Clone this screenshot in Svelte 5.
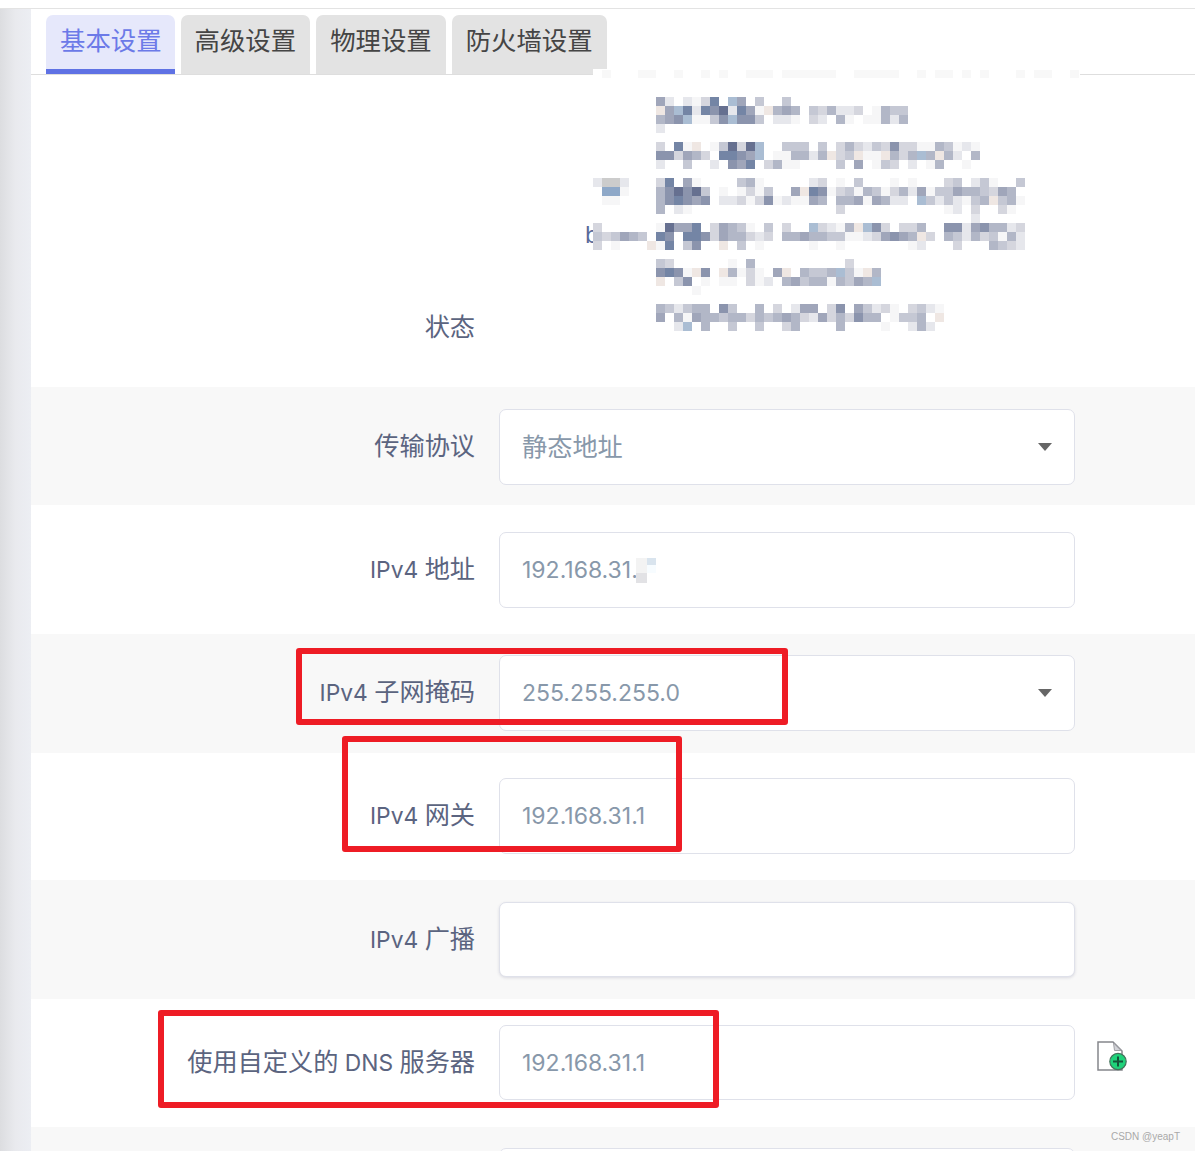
<script>
    const tabs = ["基本设置", "高级设置", "物理设置", "防火墙设置"];

    // top / bottom padding differs a little per row, the screenshot was rescaled
    const rows = [
        { label: "传输协议", value: "静态地址", select: true, top: 22, bottom: 20, h: 76 },
        { label: "IPv4 地址", value: "192.168.31.", top: 27, bottom: 26, h: 76 },
        { label: "IPv4 子网掩码", value: "255.255.255.0", select: true, top: 21, bottom: 22, h: 76 },
        { label: "IPv4 网关", value: "192.168.31.1", top: 25, bottom: 26, h: 76 },
        { label: "IPv4 广播", value: "", top: 22, bottom: 22, h: 75, shadow: true },
        { label: "使用自定义的 DNS 服务器", value: "192.168.31.1", top: 26, bottom: 27, h: 75, add: true },
        { label: "", value: "", top: 21, bottom: 0, h: 76 }
    ];

    const marks = [
        { x: 296, y: 648, w: 492, h: 77 },
        { x: 342, y: 736, w: 340, h: 116 },
        { x: 158, y: 1010, w: 561, h: 98 }
    ];

    const palette = {
        1: "#f6f6f7", 2: "#e6e7ec", 3: "#d5d6de", 4: "#c5c8d4", 5: "#b2b7c7",
        6: "#a0a6ba", 7: "#8b94ad", 8: "#7485a5", 9: "#667090",
        w: "#efe7e3", b: "#aabdd3", c: "#8ea8c8", g: "#cccccc"
    };

    // pixelated status text, 9px cells, column 7 is x=656
    const blur = [
        [97, ".......62.2138.b6.4..4"],
        [106, ".......w6b828792861w565.435223.1544"],
        [115, ".......567b1147b774.221.32.51.11525"],
        [124, ".......2"],
        [142, ".......3.81w.14939b..444.4.3532437331154121"],
        [151, ".......773653.8876b.115525w34w11w535b5w52.5"],
        [160, ".......2..4..2.768.3511....4.6.143.2.15..1"],
        [178, "2gg2...38.61....451.....23.1.4...1.1...34.241..4"],
        [187, ".cc1...579794.1.1314..6w8713415413526144655" + "4365"],
        [196, ".11....578767.22313712116" + "5.55616522.b4242145w451"],
        [205, ".......5.21................3...........12.3..31"],
        [214, "..........................................2"],
        [223, "3......19668.36541.4.3..b3215wb73.335..772675523"],
        [232, "434654.87.887365532" + "3.5565544112" + "36765w3.542534152"],
        [241, "3.1...w18.47..w.4.1.....1..1.......12...3...5432"],
        [259, ".......43......1.5..........3"],
        [268, ".......7871w7.w5131.6w.5445b41w5"],
        [277, ".......w.47.1.11.312.5645515465b"],
        [286, "...........1"],
        [304, ".......542455.74..5.3.266.37.64231.3421"],
        [313, ".......6.5165545535456532635375" + "5.1445.w"],
        [322, ".........2b.5..4..4..35....5....1..252"]
    ];

    const cells = blur.flatMap(([y, line]) =>
        [...line].map((ch, i) => ({ x: 593 + i * 9, y, fill: palette[ch] })).filter((c) => c.fill)
    );

    const strip = [[602, 9], [638, 18], [674, 9], [701, 9], [719, 9], [746, 27], [782, 54], [854, 45], [917, 9], [935, 18], [962, 9], [980, 9], [1016, 9], [1034, 18], [1070, 9]];

    // latin text sits smaller next to the chinese in the original
    const runs = (text) => text.match(/[\x00-\x7f]+|[^\x00-\x7f]+/g) ?? [];
    const isLatin = (run) => /^[\x00-\x7f]/.test(run);
</script>

{#snippet mixed(text)}
    {#each runs(text) as run}<span class:latin={isLatin(run)}>{run}</span>{/each}
{/snippet}

<div class="page">
    <div class="side"></div>
    <div class="main">
        <div class="tabs">
            {#each tabs as tab, i}
                <div class="tab" class:active={i === 0}>{tab}</div>
            {/each}
        </div>

        <div class="row status">
            <div class="label">状态</div>
        </div>

        {#each rows as row}
            <div class="row" class:short={row.h === 75} style:padding-top="{row.top}px" style:padding-bottom="{row.bottom}px">
                <div class="label">{@render mixed(row.label)}</div>
                <div class="field" class:shadow={row.shadow} style:height="{row.h}px">
                    <div>{@render mixed(row.value)}</div>
                    {#if row.select}<i class="caret"></i>{/if}
                </div>
                {#if row.add}
                    <svg class="add" width="32" height="30" viewBox="0 0 32 30">
                        <path d="M1 1h15l9 9v19H1z" fill="#fff" stroke="#85868c" stroke-width="1.5" />
                        <path d="M16.5 2l1 7.5h6.5z" fill="#d2d3d8" stroke="#a0a1a6" />
                        <circle cx="21" cy="20.5" r="8.2" fill="#1fd27a" stroke="#44705a" stroke-width="1.2" />
                        <path d="M21 15.5v10M16 20.5h10" stroke="#14553a" stroke-width="2" />
                    </svg>
                {/if}
            </div>
        {/each}
    </div>

    <div class="stray">b</div>
    <svg class="mosaic" width="1195" height="1151" shape-rendering="crispEdges">
        <rect x="593" y="69" width="14" height="6" fill="#fff" />
        <rect x="602" y="70" width="478" height="9" fill="#fff" />
        {#each strip as [x, w]}
            <rect {x} y="70" width={w} height="8" fill="#f8f8f8" />
        {/each}
        {#each cells as c}
            <rect x={c.x} y={c.y} width="9" height="9" fill={c.fill} />
        {/each}
        <rect x="636" y="558" width="11" height="15" fill="#f3f3f3" />
        <rect x="636" y="573" width="11" height="10" fill="#e2e2e5" />
        <rect x="647" y="558" width="9" height="7" fill="#d9e4ee" />
        <rect x="647" y="565" width="9" height="8" fill="#f7fcff" />
    </svg>

    {#each marks as m}
        <div class="mark" style:left="{m.x}px" style:top="{m.y}px" style:width="{m.w}px" style:height="{m.h}px"></div>
    {/each}

    <div class="watermark">CSDN @yeapT</div>
</div>

<style>
    :global(body) {
        margin: 0;
        background: #fff;
    }

    .page {
        position: relative;
        display: flex;
        height: 1151px;
        overflow: hidden;
        padding-top: 8px;
        box-sizing: border-box;
        font-family: Inter, "Noto Sans CJK SC", sans-serif;
        font-size: 25.2px;
    }

    .latin {
        font-size: 23px;
    }

    .side {
        width: 31px;
        flex: none;
        margin-top: 1px;
        background: linear-gradient(90deg, #dcdde0, #e9eaee 50%, #eceef3);
    }

    .main {
        flex: 1;
        min-width: 0;
        border-top: 1px solid #e3e3e3;
        margin-left: -31px;
        padding-left: 31px;
    }

    .tabs {
        display: flex;
        gap: 6px;
        height: 59px;
        padding: 6px 0 0 15px;
        border-bottom: 1px solid #dedede;
    }

    .tab {
        padding: 0 14px;
        height: 59px;
        box-sizing: border-box;
        line-height: 52px;
        font-size: 25.4px;
        background: #e3e3e3;
        color: #454545;
        border-radius: 7px 7px 0 0;
    }

    .tab.active {
        padding-right: 13px;
        background: #e6e8fb;
        color: #6c7ae8;
        border-bottom: 5px solid #5f72e4;
    }

    .row {
        display: flex;
        align-items: center;
        gap: 24px;
    }

    .row:nth-child(odd) {
        background: #f8f8f8;
    }

    .row.status {
        height: 312px;
        background: #fff;
        align-items: flex-end;
        padding-bottom: 0;
    }

    .status .label {
        height: 75px;
    }

    .label {
        width: 444px;
        flex: none;
        text-align: right;
        color: #5b6480;
        line-height: 30px;
        margin-top: -2px;
    }

    .label .latin {
        font-size: 22.8px;
    }

    .short .label {
        margin-top: 0;
    }

    .field {
        position: relative;
        width: 576px;
        flex: none;
        box-sizing: border-box;
        display: flex;
        align-items: center;
        padding-left: 22px;
        background: #fff;
        border: 1px solid #dfe1ea;
        border-radius: 7px;
        color: #8898aa;
        line-height: 30px;
    }

    .field > div {
        margin-top: -1px;
    }

    .field.shadow {
        box-shadow: 0 1px 3px rgba(50, 50, 93, 0.15);
    }

    .caret {
        position: absolute;
        right: 22px;
        top: 33px;
        border-left: 7px solid transparent;
        border-right: 7px solid transparent;
        border-top: 8px solid #666;
    }

    .add {
        margin-left: -2px;
        margin-top: -14px;
    }

    .mosaic {
        position: absolute;
        left: 0;
        top: 0;
        pointer-events: none;
    }

    .stray {
        position: absolute;
        left: 585px;
        top: 221px;
        color: #5a6a9a;
        font-size: 23px;
    }

    .mark {
        position: absolute;
        box-sizing: border-box;
        border: 6px solid #ee1c25;
        border-radius: 3px;
    }

    .watermark {
        position: absolute;
        right: 15px;
        top: 1131px;
        font: 10px "Liberation Sans", sans-serif;
        color: #a9a9a9;
    }
</style>
